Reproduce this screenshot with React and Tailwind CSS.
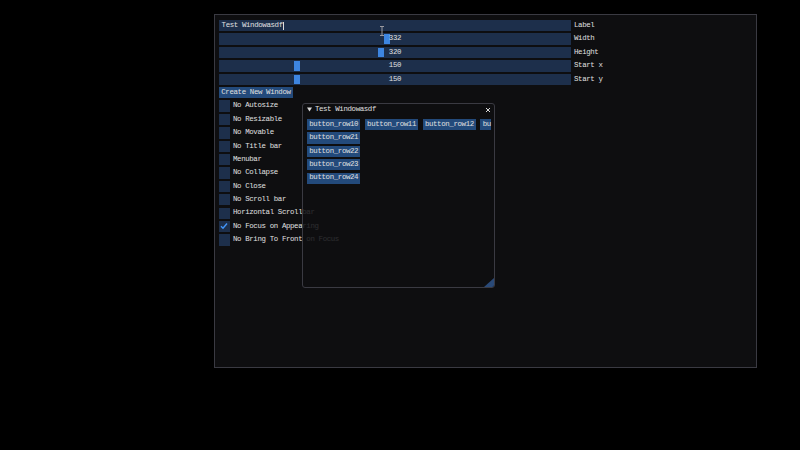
import React from "react";

const FONT = { fontFamily: '"Liberation Mono", "DejaVu Sans Mono", monospace' };
const TXT = "text-[7.4px] tracking-[-0.36px] leading-none text-[#e0e0e0]";

function Frame({ children, className = "" }) {
  return (
    <div className={"relative w-[352px] h-full bg-[#1d2f4b] " + className}>{children}</div>
  );
}

function SliderRow({ value, grab, label }) {
  return (
    <div className="flex items-center h-[11.3px]">
      <Frame className="flex items-center justify-center">
        <div className="absolute top-[1px] bottom-[1px] w-[6px] bg-[#3d85e0]" style={{ left: grab }} />
        <span className={"relative " + TXT}>{value}</span>
      </Frame>
      <span className={"ml-[3px] " + TXT}>{label}</span>
    </div>
  );
}

function CheckRow({ label, checked }) {
  return (
    <div className="flex items-center h-[11.3px]">
      <div className="relative w-[11.3px] h-[11.3px] bg-[#1d2f4b] -ml-[0.3px]">
        {checked && (
          <svg className="absolute left-[1.5px] top-[1.5px]" width="8" height="8" viewBox="0 0 8 8">
            <polyline points="1,4.2 3,6.2 7,1.5" fill="none" stroke="#4296fa" strokeWidth="1.4" />
          </svg>
        )}
      </div>
      <span className={"ml-[3px] whitespace-nowrap " + TXT}>{label}</span>
    </div>
  );
}

function Btn({ children, className = "px-[2.3px]" }) {
  return (
    <div className={"shrink-0 h-[11.3px] bg-[#234a7b] flex items-center whitespace-nowrap " + TXT + " " + className}>
      {children}
    </div>
  );
}

export default function App() {
  return (
    <div className="w-[800px] h-[450px] bg-black pt-[13.7px] pl-[214.3px]" style={FONT}>
      <div className="relative w-[543px] h-[354px] border border-[#3a3a42] bg-[#0e0e10] pl-[3.7px] pt-[5.4px] flex flex-col gap-[2.1px]">
        <div className="flex items-center h-[11.3px]">
          <Frame className="flex items-center pl-[2.6px]">
            <span className={"whitespace-pre " + TXT}>Test Windowasdf</span>
            <div className="w-[1px] h-[8px] bg-[#dcdcdc]" />
          </Frame>
          <span className={"ml-[3px] " + TXT}>Label</span>
        </div>
        <SliderRow value="332" grab={165} label="Width" />
        <SliderRow value="320" grab={159} label="Height" />
        <SliderRow value="150" grab={75} label="Start x" />
        <SliderRow value="150" grab={75} label="Start y" />
        <div className="flex">
          <Btn>Create New Window</Btn>
        </div>
        <CheckRow label="No Autosize" />
        <CheckRow label="No Resizable" />
        <CheckRow label="No Movable" />
        <CheckRow label="No Title bar" />
        <CheckRow label="Menubar" />
        <CheckRow label="No Collapse" />
        <CheckRow label="No Close" />
        <CheckRow label="No Scroll bar" />
        <CheckRow label="Horizontal Scrollbar" />
        <CheckRow label="No Focus on Appearing" checked />
        <CheckRow label="No Bring To Front on Focus" />

        <svg className="absolute left-[164px] top-[11.5px]" width="6" height="10" viewBox="0 0 6 10">
          <path d="M1 0.5 H5 M3 0.5 V9.5 M1 9.5 H5" stroke="#9a9aa0" strokeWidth="1" fill="none" />
        </svg>

        <div className="absolute left-[87px] top-[88.6px] w-[193px] h-[185px] rounded-[3px] border border-[#3a3a42] bg-[rgba(14,14,16,0.86)] overflow-hidden flex flex-col">
          <div className="h-[11px] shrink-0 flex items-center pl-[3.6px] pr-[3px]">
            <svg width="5" height="5" viewBox="0 0 5 5">
              <polygon points="0,0.5 5,0.5 2.5,4.5" fill="#dcdcdc" />
            </svg>
            <span className={"ml-[3px] whitespace-pre " + TXT}>Test Windowasdf</span>
            <svg className="ml-auto" width="6" height="6" viewBox="0 0 6 6">
              <path d="M1 1 L5 5 M5 1 L1 5" stroke="#dcdcdc" strokeWidth="1" />
            </svg>
          </div>
          <div className="mt-[3.7px] ml-[3.7px] mr-[2px] flex flex-col gap-[2.1px]">
            <div className="flex gap-[4.3px]">
              <Btn>button_row10</Btn>
              <Btn>button_row11</Btn>
              <Btn>button_row12</Btn>
              <Btn className="pl-[2.3px] w-[10.6px]">bu</Btn>
            </div>
            <div className="flex"><Btn>button_row21</Btn></div>
            <div className="flex"><Btn>button_row22</Btn></div>
            <div className="flex"><Btn>button_row23</Btn></div>
            <div className="flex"><Btn>button_row24</Btn></div>
          </div>
          <svg className="absolute right-0 bottom-0" width="10" height="9" viewBox="0 0 10 9">
            <polygon points="10,0 10,9 0,9" fill="#2a4a78" />
          </svg>
        </div>
      </div>
    </div>
  );
}
